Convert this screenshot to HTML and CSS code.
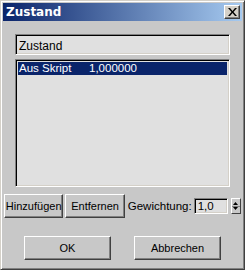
FILE: index.html
```html
<!DOCTYPE html>
<html>
<head>
  <meta charset="UTF-8">
  <title>Zustand</title>
  <link rel="stylesheet" href="styles.css">
</head>
<body>
  <div class="fenster">
    <div class="titel">
      <span class="titel-text">Zustand</span>
      <div class="schliessen">
        <svg width="9" height="8" viewBox="0 0 9 8"><path d="M0 0h2l2.5 3L7 0h2L5.5 4 9 8H7L4.5 5 2 8H0l3.5-4z" fill="#000"/></svg>
      </div>
    </div>
    <div class="inhalt">
      <div class="feld name">Zustand</div>
      <div class="feld liste">
        <div class="eintrag aktiv"><span class="e-name">Aus Skript</span><span>1,000000</span></div>
      </div>
      <div class="zeile">
        <button class="knopf klein">Hinzufügen</button>
        <button class="knopf klein">Entfernen</button>
        <span class="label">Gewichtung:</span>
        <div class="feld wert">1,0</div>
        <div class="spinner">
          <svg width="5" height="3" viewBox="0 0 5 3"><path d="M2.5 0L5 3H0z" fill="#000"/></svg>
          <div class="trenner"></div>
          <svg width="5" height="3" viewBox="0 0 5 3"><path d="M0 0h5L2.5 3z" fill="#000"/></svg>
        </div>
      </div>
      <div class="zeile unten">
        <button class="knopf gross">OK</button>
        <button class="knopf gross">Abbrechen</button>
      </div>
    </div>
  </div>
</body>
</html>
```

FILE: styles.css
```css
body { margin: 0; background: #c8c8c8; font-family: "Liberation Sans", Arial, sans-serif; font-size: 11px; color: #000; }
.fenster { width: 245px; height: 270px; box-sizing: border-box; background: #c8c8c8; border: 1px solid; border-color: #d4d0c8 #404040 #404040 #d4d0c8; box-shadow: inset 1px 1px #fff, inset -1px -1px #808080; padding: 2px; display: flex; flex-direction: column; }
.titel { height: 18px; display: flex; align-items: center; justify-content: space-between; padding: 0 2px 0 3px; background: linear-gradient(to right, #0a246a, #a6caf0); }
.titel-text { color: #fff; font-weight: bold; font-size: 12px; font-family: "DejaVu Sans", sans-serif; }
.schliessen { width: 16px; height: 14px; box-sizing: border-box; background: #d4d0c8; border: 1px solid; border-color: #fff #404040 #404040 #fff; box-shadow: inset -1px -1px #808080; display: flex; align-items: center; justify-content: center; }
.inhalt { flex: 1; display: flex; flex-direction: column; padding: 0 1px; }
.feld { background: #e0e0e0; border: 1px solid; border-color: #808080 #fff #fff #808080; box-shadow: inset 1px 1px #000, inset -1px -1px #d4d0c8; box-sizing: border-box; }
.name { margin: 13px 11px 0; height: 21px; padding: 4px 3px 0; font-size: 12px; }
.liste { margin: 4px 11px 0; height: 128px; padding: 2px; }
.eintrag { display: flex; height: 13px; line-height: 13px; padding-left: 1px; font-size: 11.5px; }
.eintrag.aktiv { background: #0a246a; color: #fff; }
.e-name { width: 70px; }
.zeile { display: flex; align-items: center; margin-top: 7px; }
.knopf { font: inherit; font-size: 11px; color: #000; background: #c8c8c8; border: 1px solid; border-color: #fff #404040 #404040 #fff; box-shadow: inset -1px -1px #808080; padding: 0; }
.klein { height: 24px; width: 61px; margin-right: 2px; }
.label { margin-left: 1px; font-size: 11.5px; }
.wert { width: 35px; height: 16px; margin-left: 2px; padding: 1px 3px 0; font-size: 11.5px; }
.spinner { width: 10px; height: 16px; margin-left: 3px; box-sizing: border-box; display: flex; flex-direction: column; align-items: center; justify-content: space-between; padding: 3px 0; border: 1px solid; border-color: #fff #404040 #404040 #fff; }
.trenner { width: 8px; height: 1px; background: #808080; }
.unten { justify-content: space-between; margin-top: 18px; padding: 0 20px; }
.gross { width: 87px; height: 24px; }
```
